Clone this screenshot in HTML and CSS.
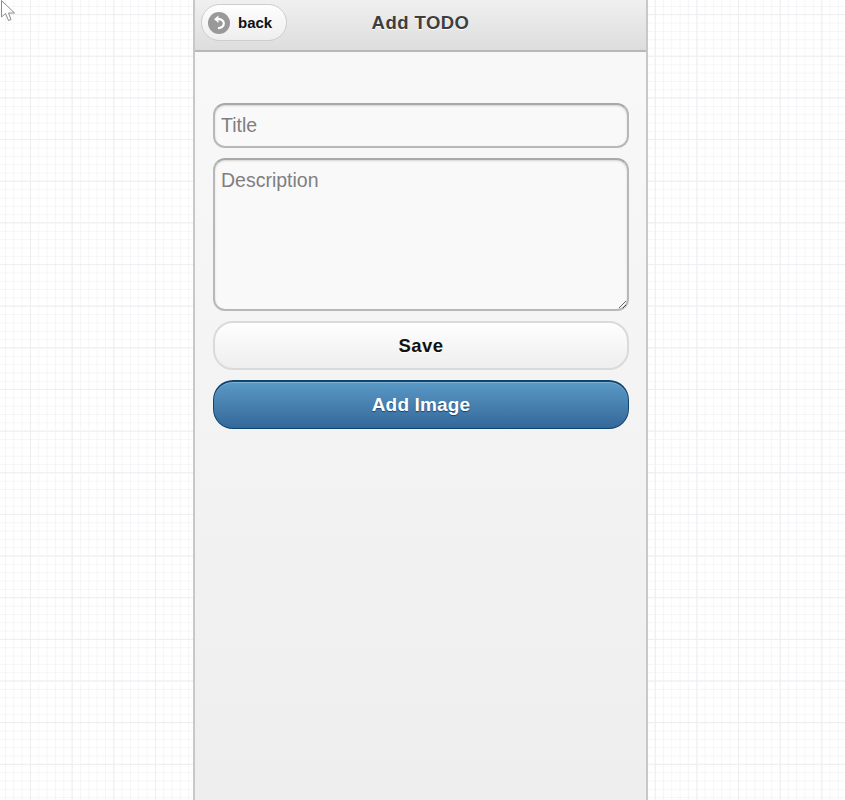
FILE: index.html
```html
<!DOCTYPE html>
<html lang="en">
<head>
    <meta charset="UTF-8">
    <meta name="viewport" content="width=device-width, initial-scale=1.0">
    <title>Add TODO</title>
    <link rel="stylesheet" href="styles.css">
</head>
<body>
    <!-- Mouse pointer from the mockup -->
    <svg class="pointer" width="16" height="22" viewBox="0 0 16 22">
        <path d="M1.500 0.500V17L5.500 13.500L8.500 20.500L11 19.500L8.500 13H14.500Z" fill="#fff" stroke="#8a8a8a" stroke-width="1"/>
    </svg>

    <div class="phone">
        <div class="header">
            <a class="back-btn">
                <svg class="back-icon" width="22" height="22" viewBox="0 0 22 22">
                    <circle cx="11" cy="11" r="11" fill="#999"/>
                    <path d="M10 7.200C13 6.800 15.800 8.500 15.800 11.500C15.800 14.500 13.200 16.300 10 16" fill="none" stroke="#fff" stroke-width="2.200"/>
                    <path d="M10.500 3.600V11L6 7.200Z" fill="#fff"/>
                </svg>
                <span>back</span>
            </a>
            <h1>Add TODO</h1>
        </div>

        <div class="content">
            <input class="field" type="text" placeholder="Title">
            <textarea class="field field-area" placeholder="Description"></textarea>
            <button class="btn btn-save">Save</button>
            <button class="btn btn-image">Add Image</button>
        </div>
    </div>
</body>
</html>
```

FILE: styles.css
```css
html, body {
    height: 100%;
}

body {
    margin: 0;
    overflow: hidden;
    font-family: "Liberation Sans", Arial, sans-serif;
    background-color: #fff;
    background-image:
        linear-gradient(#eeeef1 1px, transparent 1px),
        linear-gradient(90deg, #eeeef1 1px, transparent 1px),
        linear-gradient(#f5f5f7 1px, transparent 1px),
        linear-gradient(90deg, #f5f5f7 1px, transparent 1px);
    background-size: 41.67px 41.67px, 41.67px 41.67px, 8.33px 8.33px, 8.33px 8.33px;
    background-position: 0 14px, 30px 0, 0 6px, 5px 0;
}

.pointer {
    position: absolute;
    top: 0;
    left: 0;
}

.phone {
    box-sizing: border-box;
    width: 455px;
    height: 800px;
    margin-left: 193px;
    border-left: 2px solid #c8c8c8;
    border-right: 2px solid #c8c8c8;
    background: linear-gradient(#f9f9f9, #eeeeee);
}

.header {
    box-sizing: border-box;
    position: relative;
    height: 52px;
    display: flex;
    align-items: center;
    justify-content: center;
    padding-bottom: 5px;
    background: linear-gradient(#f0f0f0, #dddddd);
    border-bottom: 2px solid #b8b8b8;
}

.header h1 {
    margin: 0;
    font-size: 18.500px;
    font-weight: bold;
    letter-spacing: 0.450px;
    color: #3e3e3e;
    text-shadow: 0 1px 0 #fff;
}

.back-btn {
    position: absolute;
    top: 4px;
    left: 6px;
    box-sizing: border-box;
    width: 86px;
    height: 37px;
    display: flex;
    align-items: center;
    gap: 8px;
    padding-left: 6px;
    border: 1px solid #cdcdcd;
    border-radius: 19px;
    background: linear-gradient(#fefefe, #eeeeee);
    font-size: 15px;
    font-weight: bold;
    color: #111;
}

.content {
    display: flex;
    flex-direction: column;
    gap: 10px;
    padding: 51px 18px 0;
}

.field {
    box-sizing: border-box;
    width: 416px;
    height: 45px;
    margin: 0;
    padding: 0 6px;
    border: 2px solid #b8b8b8;
    border-top-color: #a8a8a8;
    border-radius: 12px;
    background: #f9f9f9;
    box-shadow: inset 0 1px 2px rgba(0, 0, 0, 0.15);
    font-family: inherit;
    font-size: 19.500px;
    color: #333;
}

.field::placeholder {
    color: #7f7f7f;
    opacity: 1;
}

.field-area {
    display: block;
    height: 153px;
    padding-top: 9px;
}

.btn {
    box-sizing: border-box;
    width: 416px;
    height: 49px;
    margin: 0;
    border-radius: 20px;
    font-family: inherit;
    font-size: 19px;
    font-weight: bold;
    letter-spacing: 0.150px;
}

.btn-save {
    border: 2px solid #dadada;
    background: linear-gradient(#fefefe, #eeeeee);
    font-size: 18.500px;
    letter-spacing: 0.500px;
    color: #111;
    text-shadow: 0 1px 0 #fff;
}

.btn-image {
    border: 1px solid #0f4470;
    border-top: 2px solid #0f4470;
    background: linear-gradient(#5a99c6, #34689a);
    box-shadow: inset 0 1px 0 rgba(255, 255, 255, 0.25);
    color: #fff;
    text-shadow: 0 1px 1px #1c4468;
}
```
